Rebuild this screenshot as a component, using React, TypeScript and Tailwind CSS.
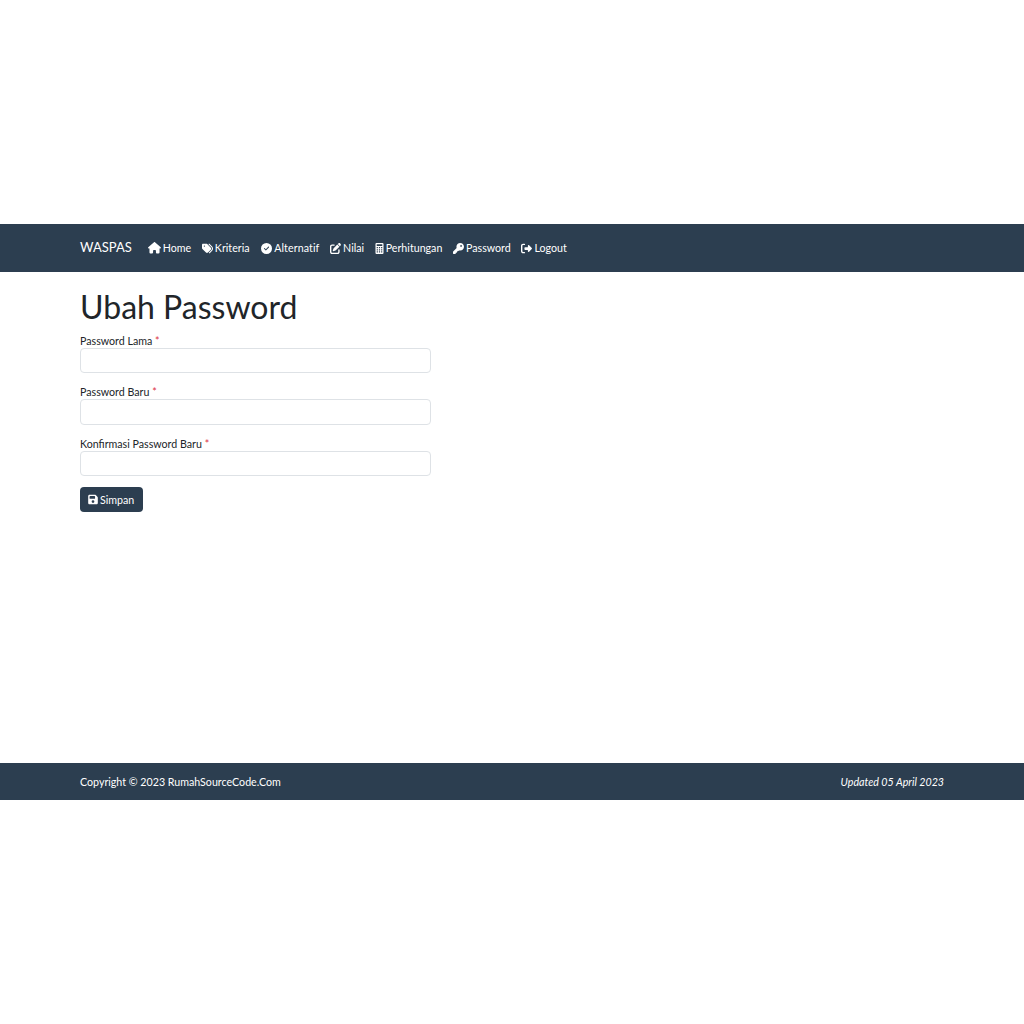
import React from "react";
import { FaHouse, FaTags, FaCircleCheck, FaPenToSquare, FaKey, FaRightFromBracket, FaFloppyDisk } from "react-icons/fa6";

function Calc({ className }: { className?: string }) {
  return (
    <svg viewBox="0 0 8 11" className={className} fill="currentColor">
      <path fillRule="evenodd" d="M1 0h6a1 1 0 0 1 1 1v9a1 1 0 0 1-1 1H1a1 1 0 0 1-1-1V1a1 1 0 0 1 1-1zm.2 1.2v1.8h5.6V1.2zm0 2.9v1.2h1.2V4.100zm2.200 0v1.200h1.200V4.100zm2.200 0v1.200h1.200V4.100zM1.200 6.200v1.200h1.200V6.200zm2.200 0v1.200h1.200V6.200zm2.200 0v1.200h1.200V6.200zM1.200 8.300v1.300h1.200V8.300zm2.200 0v1.300h1.200V8.300zm2.200 0v1.300h1.200V8.300z" />
    </svg>
  );
}

const nav = [
  { label: "Home", Icon: FaHouse, size: "w-[13px] h-[11.5px]", text: "" },
  { label: "Kriteria", Icon: FaTags, size: "w-[13px] h-[11px] -mx-[1px]", text: "mr-[1px]" },
  { label: "Alternatif", Icon: FaCircleCheck, size: "w-[11px] h-[11px]", text: "tracking-[0.1px]" },
  { label: "Nilai", Icon: FaPenToSquare, size: "w-[11px] h-[11px]", text: "" },
  { label: "Perhitungan", Icon: Calc, size: "w-[9px] h-[11px]", text: "" },
  { label: "Password", Icon: FaKey, size: "w-[11px] h-[11px]", text: "" },
  { label: "Logout", Icon: FaRightFromBracket, size: "w-[11px] h-[11px]", text: "" },
];

const fields = ["Password Lama", "Password Baru", "Konfirmasi Password Baru"];

export default function App() {
  return (
    <div className="h-[1024px] flex flex-col justify-center bg-white font-['Lato','Liberation_Sans',sans-serif] text-[#212529]">
      <nav className="h-12 bg-[#2c3e50] px-20 flex items-center text-white">
        <span className="text-[13px] mr-[16px]">WASPAS</span>
        <ul className="flex gap-[10.67px] text-[10.67px]">
          {nav.map(({ label, Icon, size, text }) => (
            <li key={label} className="flex items-center gap-[2px]">
              <Icon className={size + " shrink-0"} />
              <span className={text}>{label}</span>
            </li>
          ))}
        </ul>
      </nav>
      <main className="h-[491px] px-20 pt-[16px]">
        <h1 className="text-[32px] leading-[38px] mb-[8.67px]">Ubah Password</h1>
        <form className="w-[351px]">
          {fields.map((f) => (
            <div key={f} className="mb-[13.33px]">
              <label className="block text-[10.67px] leading-[11px] mb-[2px]">
                {f} <span className="text-[#dc3545]">*</span>
              </label>
              <input type="password" className="block w-full h-[25.33px] rounded-[4px] border border-[#dee2e6] bg-white" />
            </div>
          ))}
          <button type="button" className="h-[25px] mt-[-2.67px] pt-[1px] pl-2 pr-[9px] rounded-[4px] bg-[#2c3e50] text-white text-[10.67px] flex items-center gap-[2px]">
            <FaFloppyDisk className="w-[10px] h-[11px]" />
            <span>Simpan</span>
          </button>
        </form>
      </main>
      <footer className="h-[37px] pt-[1px] bg-[#2c3e50] px-20 flex items-center justify-between text-white text-[10.67px]">
        <span>Copyright © 2023 RumahSourceCode.Com</span>
        <em>Updated 05 April 2023</em>
      </footer>
    </div>
  );
}
